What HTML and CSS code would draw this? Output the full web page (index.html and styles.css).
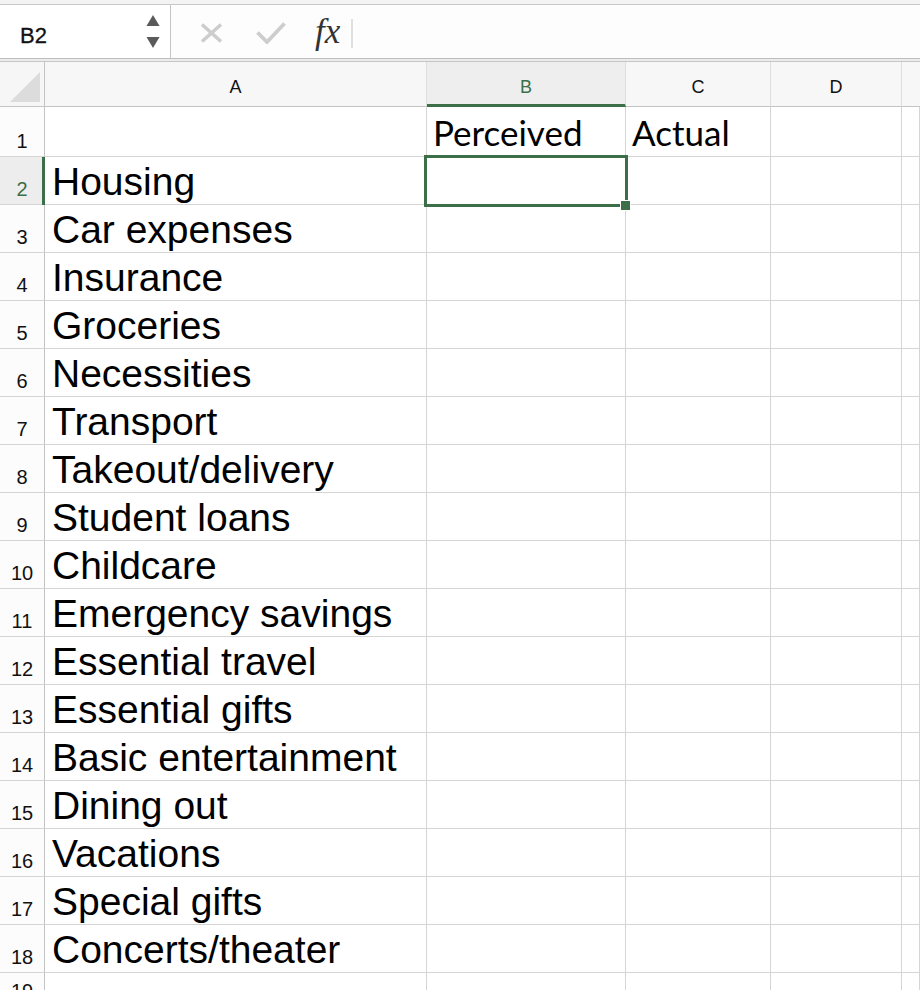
FILE: index.html
```html
<!DOCTYPE html>
<html>
<head>
<meta charset="utf-8">
<link rel="stylesheet" href="styles.css">
</head>
<body>
<div class="topstrip"></div>
<div class="formula-bar">
  <div class="namebox">
    <span class="cellref">B2</span>
    <svg class="spinner" width="14" height="34" viewBox="0 0 14 34"><polygon points="0.5,11 7,0 13.5,11" fill="#5a5a5a"/><polygon points="0.5,22 13.5,22 7,33" fill="#5a5a5a"/></svg>
  </div>
  <div class="fbuttons">
    <svg class="icon-x" width="23" height="20" viewBox="0 0 23 20"><path d="M2 1.5 L21 18.5 M21 1.5 L2 18.5" stroke="#cdcdcd" stroke-width="3.6" fill="none"/></svg>
    <svg class="icon-check" width="30" height="22" viewBox="0 0 30 22"><path d="M1.5 10.5 L11 20 L28.5 1.5" stroke="#cdcdcd" stroke-width="3.8" fill="none"/></svg>
    <span class="fx">fx</span>
    <span class="fdivider"></span>
  </div>
  <div class="finput"></div>
</div>
<div class="bar-sep"></div>
<div class="sheet">
  <div class="corner"><svg class="corner-tri" width="45" height="45" viewBox="0 0 45 45"><polygon points="10,40 40,40 40,10" fill="#dcdcdc"/></svg></div>
  <div class="colhead">A</div>
  <div class="colhead active">B</div>
  <div class="colhead">C</div>
  <div class="colhead">D</div>
  <div class="colhead last"></div>

  <div class="rowhead">1</div><div class="cell"></div><div class="cell alt">Perceived</div><div class="cell alt">Actual</div><div class="cell"></div><div class="cell"></div>
  <div class="rowhead active">2</div><div class="cell">Housing</div><div class="cell selected"><div class="selection"></div><div class="handle"></div></div><div class="cell"></div><div class="cell"></div><div class="cell"></div>
  <div class="rowhead">3</div><div class="cell">Car expenses</div><div class="cell"></div><div class="cell"></div><div class="cell"></div><div class="cell"></div>
  <div class="rowhead">4</div><div class="cell">Insurance</div><div class="cell"></div><div class="cell"></div><div class="cell"></div><div class="cell"></div>
  <div class="rowhead">5</div><div class="cell">Groceries</div><div class="cell"></div><div class="cell"></div><div class="cell"></div><div class="cell"></div>
  <div class="rowhead">6</div><div class="cell">Necessities</div><div class="cell"></div><div class="cell"></div><div class="cell"></div><div class="cell"></div>
  <div class="rowhead">7</div><div class="cell">Transport</div><div class="cell"></div><div class="cell"></div><div class="cell"></div><div class="cell"></div>
  <div class="rowhead">8</div><div class="cell">Takeout/delivery</div><div class="cell"></div><div class="cell"></div><div class="cell"></div><div class="cell"></div>
  <div class="rowhead">9</div><div class="cell">Student loans</div><div class="cell"></div><div class="cell"></div><div class="cell"></div><div class="cell"></div>
  <div class="rowhead">10</div><div class="cell">Childcare</div><div class="cell"></div><div class="cell"></div><div class="cell"></div><div class="cell"></div>
  <div class="rowhead">11</div><div class="cell">Emergency savings</div><div class="cell"></div><div class="cell"></div><div class="cell"></div><div class="cell"></div>
  <div class="rowhead">12</div><div class="cell">Essential travel</div><div class="cell"></div><div class="cell"></div><div class="cell"></div><div class="cell"></div>
  <div class="rowhead">13</div><div class="cell">Essential gifts</div><div class="cell"></div><div class="cell"></div><div class="cell"></div><div class="cell"></div>
  <div class="rowhead">14</div><div class="cell">Basic entertainment</div><div class="cell"></div><div class="cell"></div><div class="cell"></div><div class="cell"></div>
  <div class="rowhead">15</div><div class="cell">Dining out</div><div class="cell"></div><div class="cell"></div><div class="cell"></div><div class="cell"></div>
  <div class="rowhead">16</div><div class="cell">Vacations</div><div class="cell"></div><div class="cell"></div><div class="cell"></div><div class="cell"></div>
  <div class="rowhead">17</div><div class="cell">Special gifts</div><div class="cell"></div><div class="cell"></div><div class="cell"></div><div class="cell"></div>
  <div class="rowhead">18</div><div class="cell">Concerts/theater</div><div class="cell"></div><div class="cell"></div><div class="cell"></div><div class="cell"></div>
  <div class="rowhead">19</div><div class="cell"></div><div class="cell"></div><div class="cell"></div><div class="cell"></div><div class="cell"></div>
</div>
</body>
</html>
```

FILE: styles.css
```css
* { box-sizing: border-box; }
html, body { margin: 0; padding: 0; }
body {
  width: 920px;
  height: 990px;
  overflow: hidden;
  background: #fff;
  font-family: "Liberation Sans", Arial, sans-serif;
  color: #000;
}
.topstrip {
  height: 5px;
  background: #f3f3f3;
  border-bottom: 1px solid #c9c9c9;
}
.formula-bar {
  height: 53px;
  display: flex;
  background: #fdfdfd;
}
.namebox {
  width: 171px;
  flex: none;
  display: flex;
  align-items: center;
  padding: 9px 10px 0 20px;
  border-right: 1px solid #c4c4c4;
  background: #fff;
}
.cellref {
  font-size: 22px;
  line-height: 22px;
  color: #111;
  -webkit-text-stroke: 0.3px #111;
}
.spinner {
  margin-left: auto;
  margin-top: -8px;
  display: block;
}
.fbuttons {
  display: flex;
  align-items: center;
  padding-top: 3px;
  padding-left: 29px;
}
.icon-x { display: block; }
.icon-check { display: block; margin-left: 33px; }
.fx {
  margin-left: 29px;
  font-family: "Liberation Serif", "Times New Roman", serif;
  font-style: italic;
  font-size: 35px;
  line-height: 35px;
  color: #333;
  margin-top: -3px;
}
.fdivider {
  display: block;
  width: 2px;
  height: 29px;
  margin-left: 11px;
  background: #e0e0e0;
}
.finput { flex: 1; }
.bar-sep {
  height: 4px;
  background: #ececec;
  border-top: 1px solid #bdbdbd;
  border-bottom: 1px solid #c6c6c6;
}
.sheet {
  display: grid;
  grid-template-columns: 45px 382px 199px 145px 131px 1fr;
  grid-template-rows: 45px 50px repeat(17, 48px) 34px;
}
.corner {
  background: #f6f6f6;
  border-right: 1px solid #c4c4c4;
  border-bottom: 1px solid #c4c4c4;
}
.corner-tri { display: block; }
.colhead {
  background: #f7f7f7;
  border-right: 1px solid #dedede;
  border-bottom: 1px solid #c4c4c4;
  display: flex;
  align-items: center;
  justify-content: center;
  font-size: 18px;
  color: #111;
  padding-top: 6px;
}
.colhead.active {
  background: #eeeeee;
  color: #3c6e48;
  border-bottom: 3px solid #3c6e48;
  padding-top: 8px;
}
.colhead.last { border-right: none; }
.rowhead {
  background: #fcfcfc;
  border-right: 1px solid #c4c4c4;
  border-bottom: 1px solid #d5d5d5;
  display: flex;
  align-items: flex-end;
  justify-content: center;
  font-size: 20px;
  line-height: 20px;
  padding-bottom: 5px;
  color: #111;
}
.rowhead.active {
  background: #ededed;
  color: #3c6e48;
  position: relative;
}
.rowhead.active::after {
  content: "";
  position: absolute;
  top: 0;
  bottom: -1px;
  right: -1px;
  width: 3px;
  background: #3c6e48;
}
.cell {
  border-right: 1px solid #d5d5d5;
  border-bottom: 1px solid #d5d5d5;
  display: flex;
  align-items: flex-end;
  padding: 0 0 3px 7px;
  font-size: 39px;
  line-height: 39px;
  white-space: nowrap;
}
.cell.alt {
  font-family: Lato, "Open Sans", sans-serif;
  font-size: 35px;
  line-height: 35px;
  padding-bottom: 6px;
  padding-left: 6px;
}
.selected { position: relative; }
.selection {
  position: absolute;
  left: -3px;
  top: -2px;
  width: 204px;
  height: 52px;
  border: 3px solid #3c6e48;
}
.handle {
  position: absolute;
  left: 193px;
  top: 43px;
  width: 11px;
  height: 11px;
  background: #3c6e48;
  border: 1px solid #fff;
}
```
